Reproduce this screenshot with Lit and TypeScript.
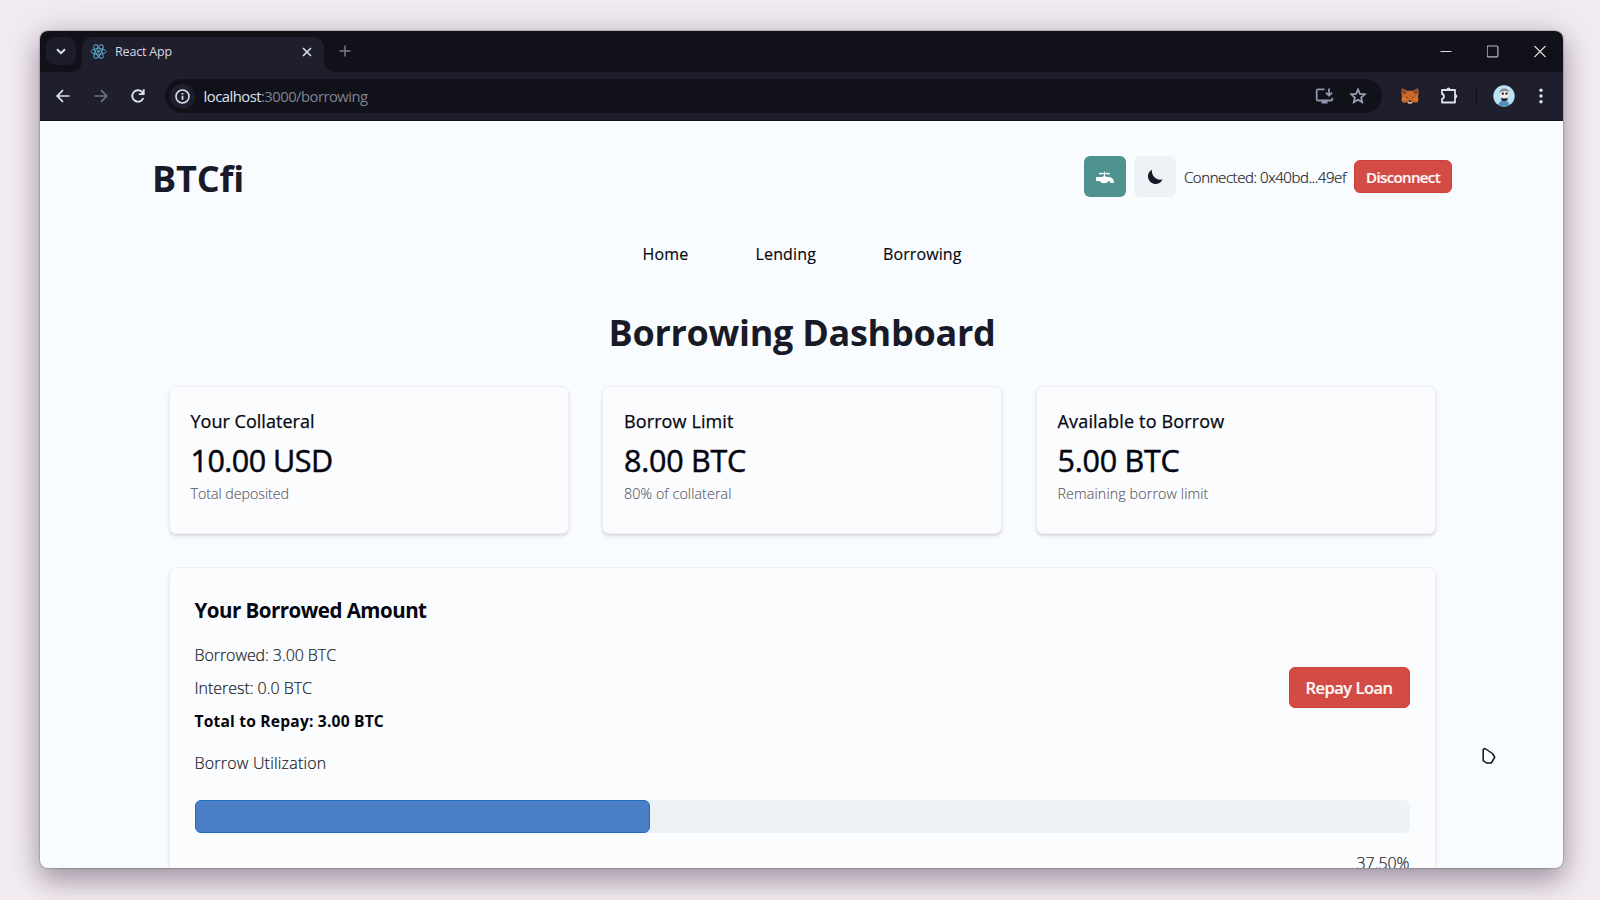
import { LitElement, html, css } from "lit";
import { customElement, property } from "lit/decorators.js";

/** A single line of text, tracked so that it fills a given advance width. */
@customElement("fit-label")
class FitLabel extends LitElement {
  @property() text = "";
  @property({ type: Number }) width = 0;

  static styles = css`
    :host { display: block; white-space: nowrap; flex: none; }
    .line { display: inline-block; font-kerning: normal; }
  `;

  updated() {
    const line = this.renderRoot.querySelector<HTMLElement>(".line")!;
    line.style.letterSpacing = "0px";
    const natural = line.getBoundingClientRect().width;
    line.style.letterSpacing = `${(this.width - natural) / this.text.length}px`;
  }

  render() {
    return html`<span class="line">${this.text}</span>`;
  }
}

const label = (text: string, width: number, cls: string) =>
  html`<fit-label class=${cls} .text=${text} .width=${width}></fit-label>`;

const reactIcon = html`<svg class="icon" width="17" height="17" viewBox="-12 -12 24 24" fill="none" stroke="#58a6c9" stroke-width="1.4">
  <circle r="2" fill="#58a6c9" stroke="none" />
  <ellipse rx="10.6" ry="4.1" /><ellipse rx="10.6" ry="4.1" transform="rotate(60)" /><ellipse rx="10.6" ry="4.1" transform="rotate(120)" />
</svg>`;

const foxIcon = html`<svg class="icon" width="18" height="16" viewBox="0 0 18 16">
  <path d="M1 .3 6.200 2.800h5.600L17 .3l.7 4.200-.7 4.100.6 3.600-1.500 2.600-4-.6-1.300 1.300H7.200l-1.300-1.300-4 .6-1.500-2.600.6-3.600-.7-4.100z" fill="#c8692b" />
  <path d="M1.300 1.300 5.800 3.600 4.400 6 1.400 5.600zM16.700 1.300l-4.500 2.300L13.600 6l3-.4z" fill="#84452a" />
  <path d="M1 8.700l4 .5 1.600 3-5.300.4zm16 0-4 .5-1.600 3 5.300.4z" fill="#d5772f" />
  <path d="M4.400 8.800l2.300.4-.6 1.100zM13.600 8.800l-2.300.4.6 1.100z" fill="#50302a" />
  <path d="M6.800 13h4.400l-.5 2.600H7.300z" fill="#d6c6c0" />
  <path d="M7.700 12.600h2.600l.2 1.400h-3z" fill="#231f28" />
</svg>`;

const avatarIcon = html`<svg class="icon" width="22" height="22" viewBox="0 0 22 22">
  <defs><clipPath id="disc"><circle cx="11" cy="11" r="10.700" /></clipPath></defs>
  <g clip-path="url(#disc)">
    <rect width="22" height="22" fill="#b9e2f7" />
    <path d="M5 22c0-4 2-6.500 6-6.500s5.500 2.500 5.500 6.500z" fill="#5590bd" />
    <path d="M8.300 12.500h6l.2 2.700-3.500 1-2.700-1z" fill="#1b2030" />
    <rect x="6.800" y="4" width="9" height="9.600" rx="4.300" fill="#f0ece8" />
    <path d="M6.800 8.500C6.300 5 8.300 3.400 11.300 3.400s4.900 1.600 4.600 4.600C14.500 5.400 8.500 5.400 6.800 8.500z" fill="#8b8a8e" />
    <rect x="8.700" y="7.600" width="2.300" height="2.200" rx="1" fill="#20242f" />
    <rect x="12.300" y="7.600" width="2.300" height="2.200" rx="1" fill="#20242f" />
  </g>
</svg>`;

@customElement("app-root")
class AppRoot extends LitElement {
  static styles = css`
    :host {
      display: block;
      width: 1600px;
      height: 900px;
      box-sizing: border-box;
      padding: 31px 37px 32px 40px;
      overflow: hidden;
      background: #f3ebf2;
      font-family: "Open Sans", "Noto Sans", sans-serif;
      color: #05060f;
    }
    *, *::before, *::after { box-sizing: border-box; }
    .icon { display: block; flex: none; }
    .window {
      height: 836.5px;
      border-radius: 8px;
      overflow: hidden;
      display: flex;
      flex-direction: column;
      background: #f9fcfe;
      box-shadow: 0 0 1px 1px rgba(60, 50, 65, 0.22), 0 14px 26px rgba(60, 45, 65, 0.32), 0 2px 34px rgba(60, 45, 65, 0.24);
      position: relative;
    }
    .tabs {
      height: 41px;
      flex: none;
      display: flex;
      background: #11111a;
      padding: 6px 0 0 6px;
    }
    .drop {
      width: 30px;
      height: 28px;
      border-radius: 9px;
      background: #1c1c2a;
      display: grid;
      place-items: center;
    }
    .tab {
      width: 242px;
      height: 35px;
      margin-left: 6px;
      padding: 0 12px 6px 8px;
      border-radius: 10px 10px 0 0;
      background: #1e1e2d;
      display: flex;
      align-items: center;
      position: relative;
    }
    .tab::before, .tab::after {
      content: "";
      position: absolute;
      bottom: 0;
      width: 10px;
      height: 10px;
    }
    .tab::before { left: -10px; background: radial-gradient(circle at 0 0, transparent 9.500px, #1e1e2d 10px); }
    .tab::after { right: -10px; background: radial-gradient(circle at 100% 0, transparent 9.500px, #1e1e2d 10px); }
    .tab-name { font-size: 12.500px; line-height: 18px; color: #d5d9e6; margin-left: 8px; flex: 1; }
    .plus { margin: 8px 0 0 15px; }
    .controls { margin: 7px 17px 0 auto; display: flex; gap: 35px; height: 14px; }
    .toolbar {
      height: 49px;
      flex: none;
      display: flex;
      align-items: center;
      background: #1e1e2d;
      border-bottom: 1px solid #14141e;
      padding: 0 16px 0 14px;
    }
    .nav-icons { display: flex; gap: 19.500px; margin-right: 18px; }
    .address {
      width: 1217px;
      height: 34px;
      border-radius: 17px;
      background: #11111a;
      display: flex;
      align-items: center;
      padding: 0 15px 0 5px;
    }
    .info {
      width: 25px;
      height: 25px;
      border-radius: 50%;
      background: #1e1e2d;
      display: grid;
      place-items: center;
      margin-right: 8.500px;
    }
    .url { font-size: 14.800px; line-height: 20px; color: #dfe3f0; }
    .url.path { color: #80838f; }
    .address-icons { margin-left: auto; display: flex; gap: 15px; align-items: center; }
    .extensions { display: flex; align-items: center; flex: 1; padding-left: 19px; }
    .puzzle { margin-left: 19.500px; }
    .rule { width: 1px; height: 16px; background: #11111a; margin-left: 17px; }
    .avatar { margin-left: 16px; }
    .dots { margin-left: auto; }

    .page { flex: 1; min-height: 0; overflow: hidden; padding: 0 128px 0 112px; }
    .header { display: flex; align-items: center; padding-top: 35px; height: 76px; margin-right: -17px; }
    .brand { font-size: 36px; line-height: 42px; font-weight: 700; color: #191a28; margin-top: 4px; }
    .account { display: flex; align-items: center; gap: 8px; margin-left: auto; }
    .square {
      width: 42px;
      height: 41px;
      border-radius: 6px;
      display: grid;
      place-items: center;
      background: #edf2f6;
    }
    .square.faucet { background: #4f9390; }
    .address-text { font-size: 15px; line-height: 22px; font-weight: 300; -webkit-text-stroke: 0.2px; color: #1b1b26; width: 162px; }
    .danger {
      display: flex;
      align-items: center;
      justify-content: center;
      border-radius: 6px;
      background: #d34b45;
      border: 1px solid #cb4039;
      color: #fdf7f6;
      font-weight: 600;
      -webkit-text-stroke: 0.2px;
    }
    .danger.small { width: 98px; height: 33px; font-size: 15px; line-height: 22px; padding-top: 1px; }
    .danger.large { width: 121px; height: 41px; font-size: 16.500px; line-height: 24px; padding-top: 1px; margin-bottom: 2px; }
    .links { display: flex; justify-content: center; gap: 67px; margin-top: 45px; padding-left: 17px; }
    .link { font-size: 16px; line-height: 24px; -webkit-text-stroke: 0.15px; }
    .title { font-size: 36px; line-height: 50px; font-weight: 700; color: #191a28; display: flex; justify-content: center; margin-top: 41.500px; padding-left: 17px; }
    .content { padding: 0 0 0 16.500px; }
    .stats { display: grid; grid-template-columns: repeat(3, 400px); gap: 33.500px; margin-top: 28.500px; }
    .card {
      border-radius: 7px;
      background: #fafcfe;
      border: 1px solid #efedf2;
      box-shadow: 0 2px 2px rgba(90, 40, 80, 0.1), 0 3px 5px rgba(80, 40, 80, 0.07);
    }
    .stat { height: 148px; padding: 20px 21px; }
    .stat-name { font-size: 18px; line-height: 28px; -webkit-text-stroke: 0.25px; }
    .stat-value { font-size: 30.500px; line-height: 40px; -webkit-text-stroke: 0.5px; margin-top: 4.500px; }
    .stat-note { font-size: 14.300px; line-height: 22px; font-weight: 300; -webkit-text-stroke: 0.15px; color: #5e5d69; margin-top: 3.500px; }
    .loan { margin-top: 33px; width: 1267px; padding: 24.500px 25px 25px; height: 360px; }
    .loan-title { font-size: 20.500px; line-height: 34px; font-weight: 700; }
    .loan-body { display: flex; align-items: center; justify-content: space-between; margin-top: 16.500px; }
    .rows { display: flex; flex-direction: column; gap: 9px; }
    .row { font-size: 16px; line-height: 24px; font-weight: 300; -webkit-text-stroke: 0.2px; color: #1b1b26; }
    .row.total { font-weight: 700; -webkit-text-stroke: 0; color: #05050d; font-size: 15.600px; }
    .usage { margin-top: 18px; }
    .bar { height: 33px; margin-top: 25px; border-radius: 6px; background: #edf2f6; }
    .fill { height: 100%; border-radius: 6px; background: #4a7fc8; border: 1px solid #1f6fbf; }
    .percent { display: flex; justify-content: flex-end; margin-top: 18px; }
    .cursor { position: absolute; left: 1441px; top: 716px; }
  `;

  private stats = [
    { name: ["Your Collateral", 124], value: ["10.00 USD", 142], note: ["Total deposited", 98.5] },
    { name: ["Borrow Limit", 109.5], value: ["8.00 BTC", 122], note: ["80% of collateral", 107.5] },
    { name: ["Available to Borrow", 167], value: ["5.00 BTC", 122], note: ["Remaining borrow limit", 151] },
  ] as { name: [string, number]; value: [string, number]; note: [string, number] }[];

  private utilization = 37.5;

  render() {
    return html`
      <div class="window">
        <div class="tabs">
          <div class="drop">
            <svg class="icon" width="10" height="7" viewBox="0 0 10 7" fill="none" stroke="#dde1ee" stroke-width="2"><path d="M1 1.200 5 5.200 9 1.200" /></svg>
          </div>
          <div class="tab">
            ${reactIcon}
            ${label("React App", 57, "tab-name")}
            <svg class="icon" width="10" height="10" viewBox="0 0 10 10" stroke="#dde1ee" stroke-width="1.600"><path d="M1 1l8 8M9 1 1 9" /></svg>
          </div>
          <svg class="icon plus" width="12" height="12" viewBox="0 0 12 12" stroke="#777985" stroke-width="1.500"><path d="M6 .5v11M.5 6h11" /></svg>
          <div class="controls">
            <svg class="icon" width="12" height="14" viewBox="0 0 12 14"><path d="M.5 7.500h11" stroke="#e2dede" stroke-width="1.200" /></svg>
            <svg class="icon" width="12" height="14" viewBox="0 0 12 14"><rect x=".1" y="2" width="10.800" height="10.800" rx="1.300" fill="none" stroke="#bdb8bc" stroke-width="1.200" /></svg>
            <svg class="icon" width="12" height="14" viewBox="0 0 12 14"><path d="M.5 2l11 11M11.500 2l-11 11" stroke="#d8d4d8" stroke-width="1.200" /></svg>
          </div>
        </div>

        <div class="toolbar">
          <div class="nav-icons">
            <svg class="icon" width="18" height="18" viewBox="0 0 18 18" fill="none" stroke="#dde1ee" stroke-width="1.700"><path d="M15.500 9H3.500M9 3.200 3.200 9 9 14.800" /></svg>
            <svg class="icon" width="18" height="18" viewBox="0 0 18 18" fill="none" stroke="#6c6f7d" stroke-width="1.700"><path d="M2.500 9h12M9 3.200 14.800 9 9 14.800" /></svg>
            <svg class="icon" width="18" height="18" viewBox="0 0 18 18" fill="none" stroke="#dde1ee" stroke-width="1.900"><path d="M14.300 11a5.700 5.700 0 1 1-1.300-6.100L14.600 6.600M14.700 2.300v4.800H9.900" /></svg>
          </div>
          <div class="address">
            <div class="info">
              <svg class="icon" width="15" height="15" viewBox="0 0 15 15" fill="none" stroke="#dde1ee" stroke-width="1.600"><circle cx="7.500" cy="7.500" r="6.500" /><path d="M7.500 6.800v4M7.500 3.900v1.700" stroke-width="1.700" /></svg>
            </div>
            ${label("localhost", 57.5, "url")}${label(":3000/borrowing", 106.5, "url path")}
            <div class="address-icons">
              <svg class="icon" width="19" height="18" viewBox="0 0 19 18" fill="none" stroke="#8f95ab" stroke-width="1.800"><path d="M9.500 2.300H3a1.300 1.300 0 0 0-1.300 1.300v8.600a1.300 1.300 0 0 0 1.300 1.300h13a1.300 1.300 0 0 0 1.300-1.300v-1.400" /><path d="M6.500 15.200h6" stroke-width="2.400" /><path d="M14 1.500v6.800M10.900 5.600 14 8.700l3.100-3.100" /></svg>
              <svg class="icon" width="18" height="18" viewBox="0 0 18 18" fill="none" stroke="#9aa2b8" stroke-width="1.700"><path d="m9 2.400 1.900 4.500 4.900.4-3.700 3.200 1.100 4.800L9 12.700l-4.200 2.600 1.100-4.800-3.700-3.200 4.900-.4z" /></svg>
            </div>
          </div>
          <div class="extensions">
            ${foxIcon}
            <svg class="icon puzzle" width="20" height="20" viewBox="0 0 20 20" fill="none" stroke="#dde1ee" stroke-width="1.800"><path d="M3 4h13v12.500H3v-3.700c2.600-.4 2.600-4.400 0-4.800z" stroke-linejoin="round" /><path d="M7.500 3.600a2 2 0 0 1 4 0zM16.300 8.200a2 2 0 0 1 0 4z" fill="#dde1ee" stroke="none" /></svg>
            <div class="rule"></div>
            <div class="avatar">${avatarIcon}</div>
            <svg class="icon dots" width="12" height="18" viewBox="0 0 12 18" fill="#dde1ee"><circle cx="6" cy="3.200" r="1.700" /><circle cx="6" cy="9" r="1.700" /><circle cx="6" cy="14.800" r="1.700" /></svg>
          </div>
        </div>

        <div class="page">
          <div class="header">
            ${label("BTCfi", 92, "brand")}
            <div class="account">
              <div class="square faucet">
                <svg class="icon" width="18" height="16" viewBox="0 0 512 512" preserveAspectRatio="none" fill="#fff"><path d="M352 256h-39.200c-12-14.700-27-24-56.800-28v-67l120 12c9 1 16-6 16-15v-24c0-9-7-16-16-15l-120 12V96c0-9-7-16-16-16s-16 7-16 16v35l-120-12c-9-1-16 6-16 15v24c0 9 7 16 16 15l120-12v67c-29 4-45 13-57 28H16c-9 0-16 7-16 16v96c0 9 7 16 16 16h93c20 43 68 72 123 72s103-29 123-72h13c18 0 32 14 32 32s14 32 32 32h48c18 0 32-14 32-32 0-88-72-160-160-160z" /></svg>
              </div>
              <div class="square">
                <svg class="icon" width="18" height="18" viewBox="0 0 18 18"><path d="M6 1.700A7.600 7.600 0 1 0 16.600 11.300C11.500 13.300 5 8.500 6 1.700z" fill="#191a28" /></svg>
              </div>
              ${label("Connected: 0x40bd...49ef", 162, "address-text")}
              <div class="danger small">${label("Disconnect", 74, "")}</div>
            </div>
          </div>

          <div class="links">
            ${label("Home", 46, "link")}${label("Lending", 60.5, "link")}${label("Borrowing", 78.5, "link")}
          </div>
          <div class="title">${label("Borrowing Dashboard", 387, "")}</div>

          <div class="content">
            <div class="stats">
              ${this.stats.map(
                (s) => html`<div class="card stat">
                  ${label(s.name[0], s.name[1], "stat-name")}
                  ${label(s.value[0], s.value[1], "stat-value")}
                  ${label(s.note[0], s.note[1], "stat-note")}
                </div>`
              )}
            </div>
            <div class="card loan">
              ${label("Your Borrowed Amount", 232, "loan-title")}
              <div class="loan-body">
                <div class="rows">
                  ${label("Borrowed: 3.00 BTC", 141.5, "row")}
                  ${label("Interest: 0.0 BTC", 117.5, "row")}
                  ${label("Total to Repay: 3.00 BTC", 189.5, "row total")}
                </div>
                <div class="danger large">${label("Repay Loan", 87, "")}</div>
              </div>
              ${label("Borrow Utilization", 132, "row usage")}
              <div class="bar"><div class="fill" style="width:${this.utilization}%"></div></div>
              <div class="percent">${label(this.utilization.toFixed(2) + "%", 53, "row")}</div>
            </div>
          </div>
        </div>

        <svg class="icon cursor" width="16" height="18" viewBox="0 0 16 18"><path d="M2.200 2.400v11.200l3.300 2.400h4.800l3.500-5.900-2.400-3.600L4 1.500z" fill="#fff" stroke="#11111a" stroke-width="1.500" stroke-linejoin="round" /></svg>
      </div>
    `;
  }
}
